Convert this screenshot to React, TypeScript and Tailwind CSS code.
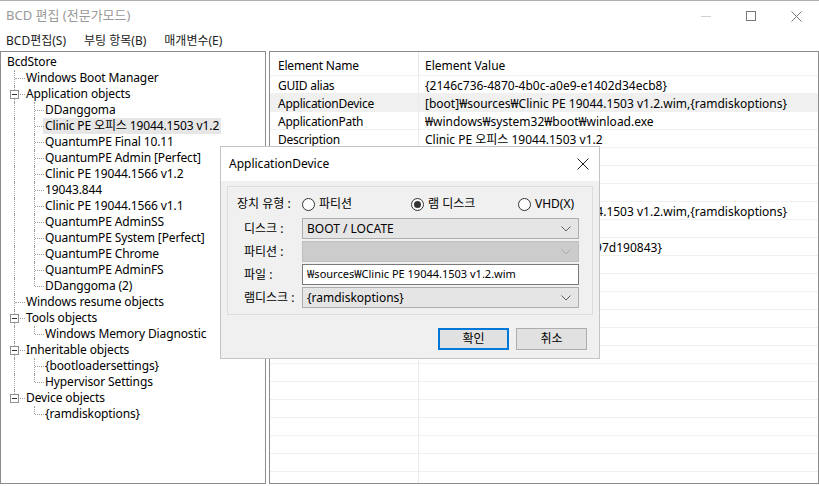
import React from 'react';

type TreeNode = {
  label: string;
  level: 0 | 1 | 2;
  box?: boolean;
  last?: boolean;
  parentLast?: boolean;
  selected?: boolean;
};

const tree: TreeNode[] = [
  { label: 'BcdStore', level: 0 },
  { label: 'Windows Boot Manager', level: 1 },
  { label: 'Application objects', level: 1, box: true },
  { label: 'DDanggoma', level: 2 },
  { label: 'Clinic PE 오피스 19044.1503 v1.2', level: 2, selected: true },
  { label: 'QuantumPE Final 10.11', level: 2 },
  { label: 'QuantumPE Admin [Perfect]', level: 2 },
  { label: 'Clinic PE 19044.1566 v1.2', level: 2 },
  { label: '19043.844', level: 2 },
  { label: 'Clinic PE 19044.1566 v1.1', level: 2 },
  { label: 'QuantumPE AdminSS', level: 2 },
  { label: 'QuantumPE System [Perfect]', level: 2 },
  { label: 'QuantumPE Chrome', level: 2 },
  { label: 'QuantumPE AdminFS', level: 2 },
  { label: 'DDanggoma (2)', level: 2, last: true },
  { label: 'Windows resume objects', level: 1 },
  { label: 'Tools objects', level: 1, box: true },
  { label: 'Windows Memory Diagnostic', level: 2, last: true },
  { label: 'Inheritable objects', level: 1, box: true },
  { label: '{bootloadersettings}', level: 2 },
  { label: 'Hypervisor Settings', level: 2, last: true },
  { label: 'Device objects', level: 1, box: true, last: true },
  { label: '{ramdiskoptions}', level: 2, last: true, parentLast: true },
];

const elements: [string, string][] = [
  ['GUID alias', '{2146c736-4870-4b0c-a0e9-e1402d34ecb8}'],
  ['ApplicationDevice', '[boot]₩sources₩Clinic PE 19044.1503 v1.2.wim,{ramdiskoptions}'],
  ['ApplicationPath', '₩windows₩system32₩boot₩winload.exe'],
  ['Description', 'Clinic PE 오피스 19044.1503 v1.2'],
  ['Locale', 'ko-KR'],
  ['InheritedObjects', '{bootloadersettings}'],
  ['IsolatedContext', 'Yes'],
  ['OSDevice', '[boot]₩sources₩Clinic PE 19044.1503 v1.2.wim,{ramdiskoptions}'],
  ['SystemRoot', '₩windows'],
  ['ResumeObject', '{a5a30fa2-3d06-4e9f-b5f4-a0397d190843}'],
  ['DetectHal', 'Yes'],
  ['WinPE', 'Yes'],
];

const labelOffset = { 0: 'ml-[4px]', 1: 'ml-[23px]', 2: 'ml-[42px]' };

function TreeRow({ n }: { n: TreeNode }) {
  const showOuter = n.level === 1 || (n.level === 2 && !n.parentLast);
  return (
    <div className="relative h-4 leading-4 whitespace-nowrap">
      {showOuter && (
        <span
          className={`absolute left-[13px] top-0 border-l border-dotted border-[#a0a0a0] ${
            n.level === 1 && n.last ? 'h-2' : 'h-4'
          }`}
        />
      )}
      {n.level === 1 && (
        <span className="absolute left-[14px] top-2 w-[10px] border-t border-dotted border-[#a0a0a0]" />
      )}
      {n.level === 2 && (
        <>
          <span
            className={`absolute left-[33px] top-0 border-l border-dotted border-[#a0a0a0] ${
              n.last ? 'h-2' : 'h-4'
            }`}
          />
          <span className="absolute left-[34px] top-2 w-[9px] border-t border-dotted border-[#a0a0a0]" />
        </>
      )}
      {n.box && (
        <span className="absolute left-[9px] top-[4px] w-[9px] h-[9px] border border-[#919191] bg-white flex items-center justify-center">
          <span className="w-[5px] h-px bg-[#333]" />
        </span>
      )}
      <span className={`inline-block px-[2px] ${labelOffset[n.level]} ${n.selected ? 'bg-[#e6e6e6]' : ''}`}>
        {n.label}
      </span>
    </div>
  );
}

function Chevron({ light }: { light?: boolean }) {
  return (
    <svg width="10" height="6" viewBox="0 0 10 6" className="shrink-0">
      <path d="M0.5 0.5 L5 5 L9.5 0.5" fill="none" stroke={light ? '#a8a8a8' : '#606060'} strokeWidth="1" />
    </svg>
  );
}

function Combo({ value, disabled }: { value: string; disabled?: boolean }) {
  return (
    <div
      className={`h-[21px] flex items-center justify-between pl-[4px] pr-[7px] border ${
        disabled ? 'bg-[#cccccc] border-[#bfbfbf]' : 'bg-[#e5e5e5] border-[#adadad]'
      }`}
    >
      <span>{value}</span>
      <Chevron light={disabled} />
    </div>
  );
}

function Radio({ label, checked }: { label: string; checked?: boolean }) {
  return (
    <span className="flex items-center gap-[4px]">
      <span className="w-[13px] h-[13px] rounded-full border border-[#333] bg-white flex items-center justify-center">
        {checked && <span className="w-[7px] h-[7px] rounded-full bg-[#333]" />}
      </span>
      <span>{label}</span>
    </span>
  );
}

function FieldRow({ label, children }: { label: string; children: React.ReactNode }) {
  return (
    <div className="flex items-center">
      <span className="w-[74px] pl-[16px] whitespace-nowrap">{label}</span>
      <div className="w-[277px]">{children}</div>
    </div>
  );
}

function DeviceDialog() {
  return (
    <div className="absolute left-[220px] top-[145px] w-[380px] h-[213px] border border-[#c4c4c4] bg-[#f0f0f0] flex flex-col">
      {/* Title */}
      <div className="h-[34px] bg-white flex items-center justify-between pl-[8px] pr-[10px] shrink-0">
        <span>ApplicationDevice</span>
        <svg width="12" height="12" viewBox="0 0 12 12">
          <path d="M0.5 0.5 L11.5 11.5 M11.5 0.5 L0.5 11.5" stroke="#222" strokeWidth="1" />
        </svg>
      </div>

      {/* Group */}
      <div className="mx-[6px] mt-[5px] border border-[#dcdcdc] h-[129px] flex flex-col">
        <div className="flex items-center h-[20px] mt-[7px]">
          <span className="w-[74px] pl-[9px] whitespace-nowrap">장치 유형 :</span>
          <span className="w-[109px]">
            <Radio label="파티션" />
          </span>
          <span className="w-[107px]">
            <Radio label="램 디스크" checked />
          </span>
          <Radio label="VHD(X)" />
        </div>
        <div className="flex flex-col gap-[2px] mt-[4px]">
          <FieldRow label="디스크 :">
            <Combo value="BOOT / LOCATE" />
          </FieldRow>
          <FieldRow label="파티션 :">
            <Combo value="" disabled />
          </FieldRow>
          <FieldRow label="파일 :">
            <div className="h-[21px] flex items-center pl-[4px] bg-white border border-[#7a7a7a] text-[11px]">
              ₩sources₩Clinic PE 19044.1503 v1.2.wim
            </div>
          </FieldRow>
          <FieldRow label="램디스크 :">
            <Combo value="{ramdiskoptions}" />
          </FieldRow>
        </div>
      </div>

      {/* Buttons */}
      <div className="flex justify-end gap-[7px] mt-[13px] pr-[12px]">
        <button className="w-[71px] h-[22px] bg-[#e1e1e1] border-2 border-[#0078d7] leading-none">확인</button>
        <button className="w-[71px] h-[22px] bg-[#e1e1e1] border border-[#adadad] leading-none">취소</button>
      </div>
    </div>
  );
}

export default function App() {
  const rows = Array.from({ length: 23 }, (_, i) => elements[i] ?? ['', '']);

  return (
    <div className="relative w-[819px] h-[486px] overflow-hidden bg-white text-[12px] text-black font-['Noto_Sans','Noto_Sans_CJK_KR',sans-serif] border-t border-[#b0b0b0]">
      {/* Title bar */}
      <div className="h-[30px] flex items-center justify-between">
        <span className="pl-[6px] text-[#999] text-[13px]">BCD 편집 (전문가모드)</span>
        <div className="flex items-center h-full">
          <div className="w-[46px] h-full flex items-center justify-center">
            <span className="w-[10px] h-px bg-[#d0d0d0]" />
          </div>
          <div className="w-[44px] h-full flex items-center justify-center">
            <span className="w-[10px] h-[10px] border border-[#777]" />
          </div>
          <div className="w-[46px] h-full flex items-center justify-center">
            <svg width="11" height="11" viewBox="0 0 11 11">
              <path d="M0.5 0.5 L10.5 10.5 M10.5 0.5 L0.5 10.5" stroke="#777" strokeWidth="1" />
            </svg>
          </div>
        </div>
      </div>

      {/* Menu */}
      <div className="h-[20px] flex items-center gap-[18px] pl-[6px] text-[#222]">
        <span>BCD편집(S)</span>
        <span>부팅 항목(B)</span>
        <span>매개변수(E)</span>
      </div>

      {/* Panels */}
      <div className="flex gap-[3px] h-[433px]">
        {/* Tree */}
        <div className="w-[266px] border border-[#8c8c8c] pt-[2px] overflow-hidden tracking-[-0.12px]">
          {tree.map((n, i) => (
            <TreeRow key={i} n={n} />
          ))}
        </div>

        {/* List */}
        <div className="flex-1 border border-[#8c8c8c] overflow-hidden">
          <div className="flex h-[24px] border-b border-[#f0f0f0]">
            <div className="w-[149px] pl-[8px] pt-[6px] leading-4 border-r border-[#e5e5e5] tracking-[-0.2px]">Element Name</div>
            <div className="flex-1 pl-[6px] pt-[6px] leading-4">Element Value</div>
          </div>
          {rows.map(([name, value], i) => (
            <div
              key={i}
              className={`flex h-[18px] border-b border-[#f0f0f0] whitespace-nowrap ${
                i === 1 ? 'bg-[#f0f0f0]' : ''
              }`}
            >
              <div className="w-[149px] pl-[8px] pt-[2px] leading-4 border-r border-[#ececec] tracking-[-0.25px]">{name}</div>
              <div className="flex-1 pl-[6px] pt-[2px] leading-4">{value}</div>
            </div>
          ))}
        </div>
      </div>

      <DeviceDialog />
    </div>
  );
}
